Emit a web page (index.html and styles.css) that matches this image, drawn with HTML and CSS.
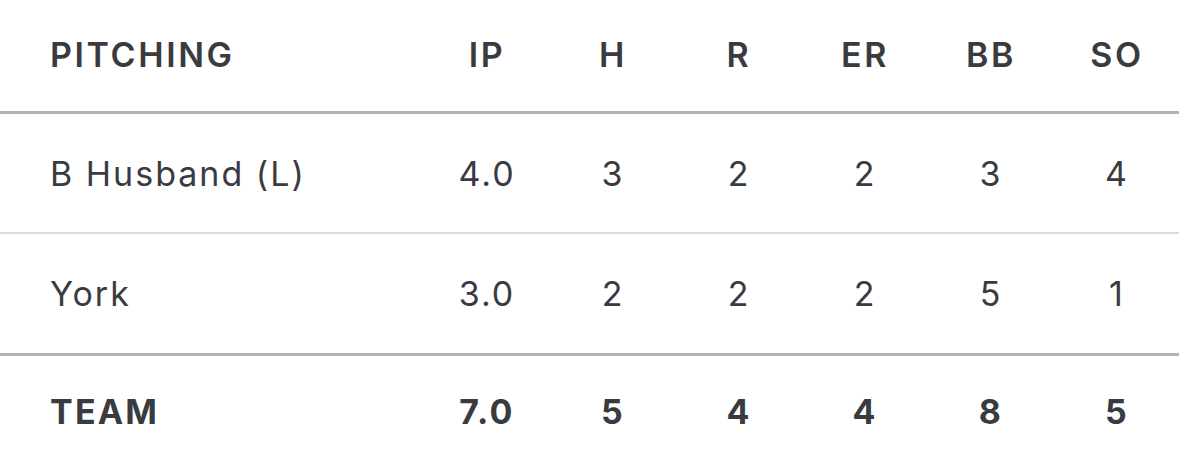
FILE: index.html
```html
<!DOCTYPE html>
<html>
<head>
<meta charset="utf-8">
<link rel="stylesheet" href="styles.css">
</head>
<body>
<div class="box">
  <div class="row head">
    <div class="name">PITCHING</div>
    <div class="stat">IP</div>
    <div class="stat">H</div>
    <div class="stat">R</div>
    <div class="stat">ER</div>
    <div class="stat">BB</div>
    <div class="stat">SO</div>
  </div>
  <div class="row player">
    <div class="name">B Husband (L)</div>
    <div class="stat">4.0</div>
    <div class="stat">3</div>
    <div class="stat">2</div>
    <div class="stat">2</div>
    <div class="stat">3</div>
    <div class="stat">4</div>
  </div>
  <div class="row player last">
    <div class="name">York</div>
    <div class="stat">3.0</div>
    <div class="stat">2</div>
    <div class="stat">2</div>
    <div class="stat">2</div>
    <div class="stat">5</div>
    <div class="stat">1</div>
  </div>
  <div class="row total">
    <div class="name">TEAM</div>
    <div class="stat">7.0</div>
    <div class="stat">5</div>
    <div class="stat">4</div>
    <div class="stat">4</div>
    <div class="stat">8</div>
    <div class="stat">5</div>
  </div>
</div>
</body>
</html>
```
FILE: styles.css
```css
html, body {
  margin: 0;
  padding: 0;
  background: #ffffff;
}
body {
  font-family: Inter, "Liberation Sans", sans-serif;
  color: #3a3b3f;
  font-size: 34px;
  letter-spacing: 2px;
}
.box {
  display: flex;
  flex-direction: column;
}
.row {
  display: grid;
  grid-template-columns: 1fr repeat(6, 126px);
  align-items: center;
}
.name {
  padding-left: 50px;
}
.stat {
  text-align: center;
  padding-left: 2px;
}
.head {
  height: 108px;
  padding-bottom: 3px;
  border-bottom: 3px solid #a9b3b8;
  font-weight: 600;
  letter-spacing: 2.6px;
}
.player {
  height: 118px;
  border-bottom: 2px solid #d6dde0;
  font-weight: 400;
}
.player.last {
  height: 119px;
  border-bottom: 3px solid #a9b3b8;
}
.total {
  height: 110px;
  font-weight: 700;
  letter-spacing: 2.2px;
}
```
